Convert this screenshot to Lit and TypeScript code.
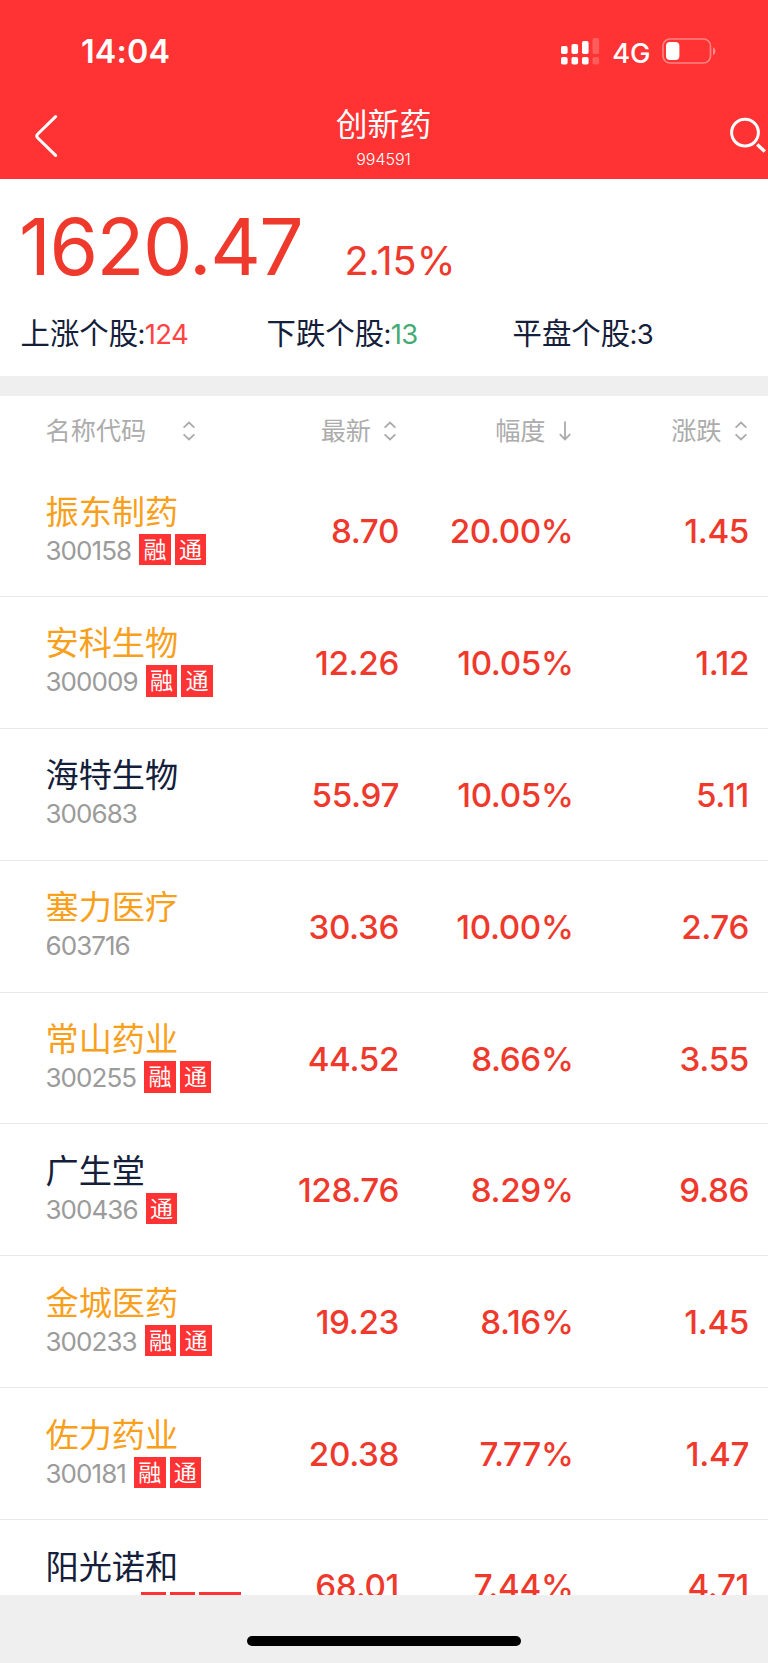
import { LitElement, html, css, svg } from "lit";
import { customElement, property } from "lit/decorators.js";
import { classMap } from "lit/directives/class-map.js";

interface Stock {
  name: string;
  code: string;
  tags: string[];
  gold: boolean;
  price: string;
  pct: string;
  chg: string;
}

const s = (name: string, code: string, tags: string, gold: boolean, price: string, pct: string, chg: string): Stock => ({
  name, code, tags: [...tags], gold, price, pct, chg,
});

const STOCKS: Stock[] = [
  s("振东制药", "300158", "融通", true, "8.70", "20.00%", "1.45"),
  s("安科生物", "300009", "融通", true, "12.26", "10.05%", "1.12"),
  s("海特生物", "300683", "", false, "55.97", "10.05%", "5.11"),
  s("塞力医疗", "603716", "", true, "30.36", "10.00%", "2.76"),
  s("常山药业", "300255", "融通", true, "44.52", "8.66%", "3.55"),
  s("广生堂", "300436", "通", false, "128.76", "8.29%", "9.86"),
  s("金城医药", "300233", "融通", true, "19.23", "8.16%", "1.45"),
  s("佐力药业", "300181", "融通", true, "20.38", "7.77%", "1.47"),
  s("阳光诺和", "", "", false, "68.01", "7.44%", "4.71"),
];

@customElement("status-bar")
class StatusBar extends LitElement {
  static styles = css`
    :host { display: flex; height: 103px; align-items: flex-start; justify-content: space-between; box-sizing: border-box; padding: 31px 51px 0 81px; }
    .time { font-size: 32.3px; line-height: 42px; font-weight: 600; letter-spacing: 0.2px; }
    .right { display: flex; align-items: center; height: 40px; }
    .net { font-size: 27.4px; font-weight: 500; margin: 3px 12px 0 12px; letter-spacing: -0.4px; line-height: 40px; }
    svg { display: block; }
  `;
  render() {
    const bars = [
      [0, 15, 8], [10.5, 13, 10], [21, 10, 13], [31.5, 7, 16],
    ];
    return html`
      <span class="time">14:04</span>
      <span class="right">
        <svg width="39" height="40" viewBox="0 0 39 40" fill="#fff">
          ${bars.map(([x, y, h], i) => svg`<g opacity=${i === 3 ? 0.2 : 1}>
            <rect x=${x} y=${y} width="6.6" height=${h} rx="1.8"/>
            <rect x=${x} y="26" width="6.6" height="7.6" rx="1.8"/></g>`)}
        </svg>
        <span class="net">4G</span>
        <svg width="55" height="40" viewBox="0 0 55 40">
          <rect x="1" y="8" width="47.5" height="24" rx="7" fill="none" stroke="#fff" stroke-opacity=".4" stroke-width="1.6"/>
          <rect x="4" y="11" width="13.4" height="18" rx="4" fill="#fff"/>
          <path d="M51 16.2c3.2 1.6 3.2 6.4 0 8z" fill="#fff" fill-opacity=".45"/>
        </svg>
      </span>`;
  }
}

@customElement("nav-bar")
class NavBar extends LitElement {
  static styles = css`
    :host { display: grid; grid-template-columns: 1fr auto 1fr; height: 76px; }
    .back { padding: 10px 0 0 34px; }
    .title { text-align: center; padding-right: 1px; }
    .name { font-size: 31.8px; line-height: 40px; height: 40px; margin-top: 2px; }
    .code { font-size: 16px; line-height: 20px; margin-top: 4px; font-weight: 300; }
    .search { justify-self: end; padding-top: 13px; }
    svg { display: block; }
  `;
  render() {
    return html`
      <div class="back">
        <svg width="26" height="46" viewBox="0 0 26 46" fill="none" stroke="#fff" stroke-width="3" stroke-linecap="round" stroke-linejoin="round">
          <path d="M21.6 3.6 3.8 21q-2 2 0 4L21.6 42.4"/>
        </svg>
      </div>
      <div class="title"><div class="name">创新药</div><div class="code">994591</div></div>
      <div class="search">
        <svg width="40" height="40" viewBox="0 0 40 40" fill="none" stroke="#fff" stroke-width="3">
          <circle cx="17" cy="16.6" r="13.4"/><path d="m29.2 28.4 7.6 7.2" stroke-width="3.4"/>
        </svg>
      </div>`;
  }
}

@customElement("index-summary")
class IndexSummary extends LitElement {
  static styles = css`
    :host { display: block; height: 197px; background: #fff; }
    .quote { display: flex; align-items: baseline; padding: 20px 0 0 19px; color: #ef392c; line-height: 96px; height: 96px; }
    .value { font-size: 78.5px; width: 325.5px; letter-spacing: -1.5px; white-space: nowrap; }
    .rate { font-size: 39.5px; }
    .stats { display: grid; grid-template-columns: 246px 246px 1fr; padding: 19px 0 0 20.5px; font-size: 29.4px; line-height: 40px; color: #14203a; white-space: nowrap; }
    .n { font-size: 27.5px; letter-spacing: -0.7px; margin-left: -0.5px; }
    .up { color: #ff4343; }
    .down { color: #45ab76; }
  `;
  render() {
    return html`
      <div class="quote"><span class="value">1620.47</span><span class="rate">2.15%</span></div>
      <div class="stats">
        <span>上涨个股<span class="n">:<span class="up">124</span></span></span>
        <span>下跌个股<span class="n">:<span class="down">13</span></span></span>
        <span>平盘个股<span class="n">:3</span></span>
      </div>`;
  }
}

const sortIcon = html`<svg width="14" height="22" viewBox="0 0 14 22" fill="none" stroke="#aaa" stroke-width="1.8"><path d="m1.6 7.6 5.4-5 5.4 5M1.6 14.4l5.4 5 5.4-5"/></svg>`;
const downIcon = html`<svg width="14" height="22" viewBox="0 0 14 22" fill="none" stroke="#aaa" stroke-width="1.8"><path d="M7 1.5v17.5M1.8 14.2 7 19.4l5.2-5.2"/></svg>`;

@customElement("list-head")
class ListHead extends LitElement {
  static styles = css`
    :host { display: grid; grid-template-columns: 351.5px 174.5px 176px; height: 69px; padding-left: 45.5px; align-items: center; color: #acacac; font-size: 25.2px; line-height: 36px; }
    .c { display: flex; align-items: center; justify-content: flex-end; gap: 12px; }
    .latest { flex: 1; }
    .pair { display: flex; align-items: center; }
    .pair .label { width: 136.5px; }
    svg { display: block; }
  `;
  render() {
    return html`
      <div class="c"><span class="pair"><span class="label">名称代码</span>${sortIcon}</span><span class="c latest">最新${sortIcon}</span></div>
      <div class="c">幅度${downIcon}</div>
      <div class="c">涨跌${sortIcon}</div>`;
  }
}

@customElement("stock-row")
class StockRow extends LitElement {
  @property({ attribute: false }) stock!: Stock;
  static styles = css`
    :host { display: grid; grid-template-columns: 200px 153.5px 174.5px 175.5px; height: 131.9px; box-sizing: border-box; padding-left: 45.5px; border-bottom: 1px solid #e9e9e9; flex: none; }
    .id { padding-top: 24.5px; }
    .name { font-size: 33.2px; line-height: 44px; height: 44px; color: #14203a; white-space: nowrap; }
    .gold { color: #f8a01b; }
    .sub { display: flex; align-items: flex-start; height: 32px; }
    .code { font-size: 26px; line-height: 33px; color: #9b9b9b; margin-right: 8.2px; letter-spacing: -0.95px; }
    .tag { width: 31.5px; height: 31.5px; background: #ff3333; color: #fff; font-size: 23px; line-height: 32px; text-align: center; margin-right: 4px; }
    .num { font-size: 33.2px; font-weight: 500; line-height: 40px; padding-top: 46px; text-align: right; color: #ef392c; letter-spacing: -0.35px; }
    .cut { display: flex; padding-top: 3.5px; gap: 4px; margin-left: 95px; }
    .chip { width: 25px; height: 25px; background: #ff3333; }
    .wide { width: 42px; }
  `;
  render() {
    const r = this.stock;
    return html`
      <div class="id">
        <div class=${classMap({ name: true, gold: r.gold })}>${r.name}</div>
        ${r.code
          ? html`<div class="sub"><span class="code">${r.code}</span>${r.tags.map((t) => html`<span class="tag">${t}</span>`)}</div>`
          : html`<div class="cut"><span class="chip"></span><span class="chip"></span><span class="chip wide"></span></div>`}
      </div>
      <div class="num">${r.price}</div>
      <div class="num">${r.pct}</div>
      <div class="num">${r.chg}</div>`;
  }
}

@customElement("app-root")
class AppRoot extends LitElement {
  static styles = css`
    :host { display: flex; flex-direction: column; width: 768px; height: 1663px; overflow: hidden; background: #fff; font-family: Inter, "Noto Sans CJK SC", sans-serif; }
    .top { background: #ff3333; color: #fff; height: 179px; flex: none; }
    .gap { height: 20px; background: #efefef; flex: none; }
    .list { flex: 1; min-height: 0; overflow: hidden; display: flex; flex-direction: column; }
    .home { flex: none; height: 68px; background: #efefef; display: flex; justify-content: center; align-items: flex-start; }
    .bar { width: 274px; height: 10px; border-radius: 5px; background: #000; margin-top: 41px; }
  `;
  render() {
    return html`
      <div class="top"><status-bar></status-bar><nav-bar></nav-bar></div>
      <index-summary></index-summary>
      <div class="gap"></div>
      <list-head></list-head>
      <div class="list">${STOCKS.map((r) => html`<stock-row .stock=${r}></stock-row>`)}</div>
      <div class="home"><div class="bar"></div></div>`;
  }
}
